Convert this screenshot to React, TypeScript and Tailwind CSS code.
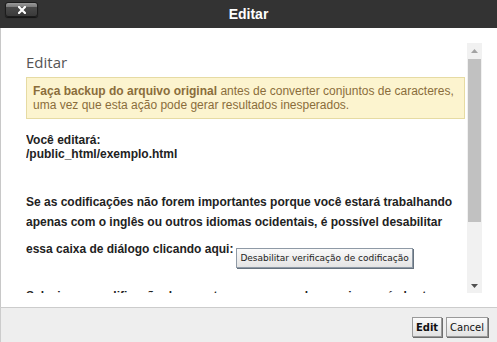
import React from "react";

function CloseButton() {
  return (
    <button className="w-[33px] h-[15px] rounded-[3px] border border-[#1c1c1c] bg-[linear-gradient(to_bottom,#9a9a9a_0%,#7a7a7a_30%,#4a4a4a_32%,#3a3a3a_100%)] shadow-[0_1px_1px_rgba(0,0,0,0.6)] flex items-center justify-center">
      <svg width="8" height="8" viewBox="0 0 8 8">
        <path d="M1 1L7 7M7 1L1 7" stroke="#fff" strokeWidth="2.2" strokeLinecap="square" />
      </svg>
    </button>
  );
}

function Scrollbar() {
  return (
    <div className="w-[15px] h-full bg-[#f1f1f1] flex flex-col">
      <div className="h-[15px] flex items-center justify-center">
        <svg width="7" height="4" viewBox="0 0 7 4">
          <path d="M0 4L3.5 0L7 4Z" fill="#a3a3a3" />
        </svg>
      </div>
      <div className="mt-[1px] mx-[1px] h-[163px] bg-[#c1c1c1]" />
      <div className="flex-1" />
      <div className="h-[15px] flex items-center justify-center">
        <svg width="7" height="4" viewBox="0 0 7 4">
          <path d="M0 0L3.5 4L7 0Z" fill="#505050" />
        </svg>
      </div>
    </div>
  );
}

export default function App() {
  return (
    <div className="w-[497px] h-[342px] flex flex-col overflow-hidden font-['Liberation_Sans',Arial,sans-serif] text-[#222]">
      <div className="h-[28px] shrink-0 bg-[#333] grid grid-cols-[1fr_auto_1fr] items-center">
        <div className="self-start pt-[2px] pl-[5px]">
          <CloseButton />
        </div>
        <h1 className="text-white font-bold text-[14px] leading-none">Editar</h1>
        <div />
      </div>

      <div className="h-[279px] shrink-0 bg-white border-l border-[#c8c8c8] pt-[15px] pl-[25px] pr-[15px]">
        <div className="flex h-[250px] gap-[2px]">
          <div className="flex-1 min-w-0 overflow-hidden">
            <h2 className="mt-[9px] text-[15px] leading-[20px] text-[#555] font-['Open_Sans',sans-serif]">
              Editar
            </h2>
            <div className="mt-[5px] border border-[#e6dba3] bg-[#fcf4cf] px-[6px] py-[6px] text-[12px] leading-[14px] text-[#8a6d3b]">
              <b>Faça backup do arquivo original</b> antes de converter conjuntos de caracteres,
              uma vez que esta ação pode gerar resultados inesperados.
            </div>
            <div className="mt-[14px] text-[12px] leading-[14px] font-bold text-[#222]">
              <div>Você editará:</div>
              <div>/public_html/exemplo.html</div>
            </div>
            <div className="mt-[31px] text-[12px] leading-[20px] font-bold text-[#222] whitespace-nowrap">
              <div>Se as codificações não forem importantes porque você estará trabalhando</div>
              <div>apenas com o inglês ou outros idiomas ocidentais, é possível desabilitar</div>
              <div className="mt-[7px] flex items-start">
                <span>essa caixa de diálogo clicando aqui:</span>
                <button className="ml-[3px] mt-[9px] h-[20px] px-[3px] border border-[#8f9aa6] shadow-[1px_1px_0_#66727e] bg-[linear-gradient(to_bottom,#fafafa,#e4e4e4)] text-[9px] leading-none font-normal text-[#222] font-['DejaVu_Sans',sans-serif]">
                  Desabilitar verificação de codificação
                </button>
              </div>
              <div className="mt-[18px]">
                Selecione a codificação de caracteres com a qual o arquivo será aberto:
              </div>
            </div>
          </div>
          <Scrollbar />
        </div>
      </div>

      <div className="flex-1 bg-[#eeeeee] border-t border-l border-[#cccccc] flex justify-end items-start gap-[4px] pt-[9px] pr-[9px] font-['DejaVu_Sans',sans-serif] text-[10px] text-[#111]">
        <button className="h-[20px] px-[3px] font-bold border border-[#9a9a9a] shadow-[1px_1px_0_#6e6e6e] bg-[linear-gradient(to_bottom,#fbfbfb,#e2e2e2)]">
          Edit
        </button>
        <button className="h-[20px] px-[3px] border border-[#9a9a9a] shadow-[1px_1px_0_#6e6e6e] bg-[linear-gradient(to_bottom,#fbfbfb,#e2e2e2)]">
          Cancel
        </button>
      </div>
    </div>
  );
}
